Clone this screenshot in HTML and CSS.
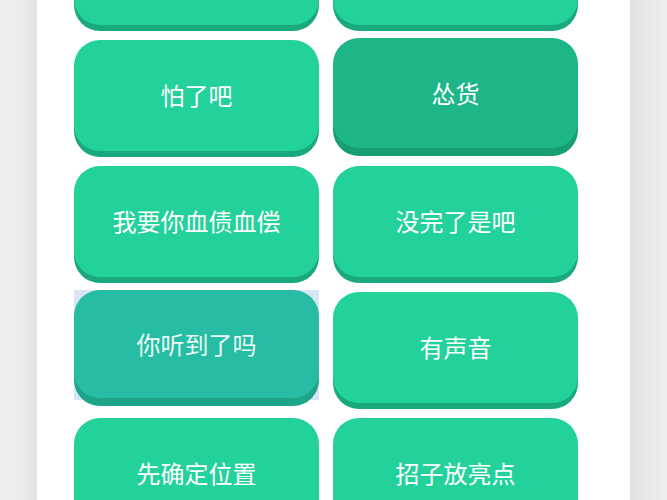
FILE: index.html
```html
<!DOCTYPE html>
<html lang="zh-CN">
<head>
<meta charset="utf-8">
<link rel="stylesheet" href="styles.css">
</head>
<body>
<div class="side side-left"></div>
<main class="panel">
  <div class="grid">
    <div class="cell"><button class="btn" aria-label="按钮"></button></div>
    <div class="cell"><button class="btn" aria-label="按钮"></button></div>
    <div class="cell"><button class="btn">怕了吧</button></div>
    <div class="cell"><button class="btn btn-dark">怂货</button></div>
    <div class="cell"><button class="btn">我要你血债血偿</button></div>
    <div class="cell"><button class="btn">没完了是吧</button></div>
    <div class="cell cell-selected"><button class="btn btn-selected">你听到了吗</button></div>
    <div class="cell"><button class="btn">有声音</button></div>
    <div class="cell"><button class="btn">先确定位置</button></div>
    <div class="cell"><button class="btn">招子放亮点</button></div>
  </div>
</main>
<div class="side side-right"></div>
</body>
</html>
```

FILE: styles.css
```css
html, body {
  margin: 0;
  padding: 0;
  height: 100%;
  overflow: hidden;
}
body {
  display: flex;
  font-family: "Noto Sans CJK SC", "Noto Sans", sans-serif;
  background: #ececec;
}
.side {
  width: 37px;
  flex: none;
}
.side-left {
  background: linear-gradient(to right, #efefef 0%, #ebebeb 70%, #e0e0e0 100%);
}
.side-right {
  background: linear-gradient(to right, #e0e0e0 0%, #e8e8e8 40%, #efefef 100%);
}
.panel {
  width: 593px;
  flex: none;
  background: #ffffff;
  padding: 0 52px 0 37px;
  box-sizing: border-box;
  overflow: hidden;
}
.grid {
  display: grid;
  grid-template-columns: 245px 245px;
  grid-auto-rows: 111px;
  column-gap: 14px;
  row-gap: 15px;
  margin-top: -86px;
}
.cell {
  display: flex;
}
.btn {
  flex: 1;
  border: none;
  margin: 0;
  padding: 0 0 2px 0;
  height: 111px;
  border-radius: 26px;
  background: #22d29a;
  box-shadow: 0 6px 0 #1aa87e;
  color: #ffffff;
  font-family: "Noto Sans CJK SC", "Noto Sans", sans-serif;
  font-size: 24px;
  font-weight: 400;
  cursor: pointer;
}
.btn-dark {
  background: #1cb688;
  box-shadow: 0 8px 0 #189e75;
  transform: translateY(-2px);
  height: 110px;
}
.cell-selected {
  background: #d6e6f5;
  height: 110px;
  transform: translateY(-2px);
}
.btn-selected {
  background: #26bda4;
  box-shadow: 0 8px 0 #1ea487;
  color: #eafaf6;
  height: 108px;
}
```
